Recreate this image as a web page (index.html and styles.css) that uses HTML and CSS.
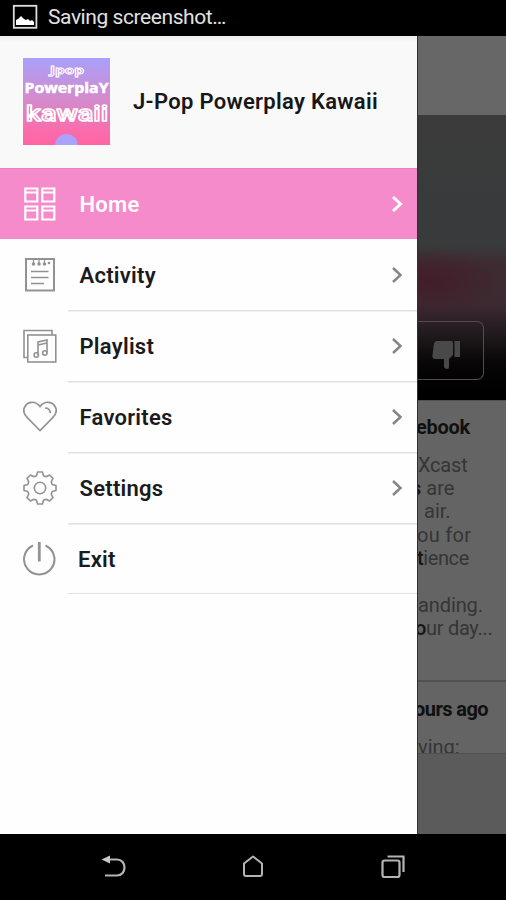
FILE: index.html
```html
<!DOCTYPE html>
<html lang="en">
<head>
<meta charset="utf-8">
<title>J-Pop Powerplay Kawaii</title>
<link rel="stylesheet" href="styles.css">
</head>
<body>
<div class="phone">
  <header class="status">
    <svg class="status-icon" width="26" height="26" viewBox="0 0 26 26"><rect x="1.800" y="1.800" width="22.600" height="22" fill="none" stroke="#ddd" stroke-width="1.800"/><path d="M4 21v-5l2-1 3-3 3 3 2 1 2-1 2 2 2-1 2 2v3z" fill="#fff"/></svg>
    <span class="status-text">Saving screenshot…</span>
  </header>
  <main class="content">
    <nav class="drawer">
      <div class="profile">
        <svg class="cover" width="87" height="87" viewBox="0 0 87 87">
          <defs><linearGradient id="sky" x2="0" y2="1"><stop offset="0" stop-color="#a9a0fb"/><stop offset=".48" stop-color="#d48bcc"/><stop offset=".85" stop-color="#fb6bab"/><stop offset="1" stop-color="#ff65a2"/></linearGradient></defs>
          <rect width="87" height="87" fill="url(#sky)"/>
          <circle cx="43.500" cy="87.500" r="11.500" fill="#a9a3fa"/>
          <g class="cover-text">
            <text class="cover-small" x="27" y="16" textLength="34" lengthAdjust="spacingAndGlyphs">Jpop</text>
            <text class="cover-mid" x="1.500" y="34.500" textLength="84" lengthAdjust="spacingAndGlyphs">PowerplaY</text>
            <text class="cover-big" x="3" y="62.500" textLength="82" lengthAdjust="spacingAndGlyphs">kawaii</text>
          </g>
        </svg>
        <h1 class="title">J-Pop Powerplay Kawaii</h1>
      </div>
      <ul class="menu">
        <li class="item active">
          <svg class="icon" width="34" height="34" viewBox="0 0 34 34"><g fill="none" stroke="#fff" stroke-width="2.200"><path d="M2.300 1.500h12v13h-12zM19.300 1.500h12v13h-12zM2.300 19.500h12v13h-12zM19.300 19.500h12v13h-12z"/><path stroke-width="1.800" d="M2 5.500h12M19 5.500h12M2 23.500h12M19 23.500h12"/></g></svg>
          <span class="label">Home</span>
          <svg class="chev" width="12" height="18" viewBox="0 0 12 18"><path d="M2 2l7.500 7L2 16"/></svg>
        </li>
        <li class="item">
          <svg class="icon" width="34" height="34" viewBox="0 0 34 34"><g fill="none" stroke="#929292"><path stroke-width="2" d="M3 1h28v31.500H3z"/><path stroke-width="1.600" d="M8 13.500h17.500M8 19.500h17.500M8 25.500h13"/><path stroke-width="1.200" d="M10.500 2v3M16 2v3M21.500 2v3"/></g><g fill="#929292"><circle cx="10.500" cy="6" r="1.800"/><circle cx="16" cy="6" r="1.800"/><circle cx="21.500" cy="6" r="1.800"/><circle cx="26" cy="5" r="1.300"/></g></svg>
          <span class="label">Activity</span>
          <svg class="chev" width="12" height="18" viewBox="0 0 12 18"><path d="M2 2l7.500 7L2 16"/></svg>
        </li>
        <li class="item">
          <svg class="icon" width="34" height="34" viewBox="0 0 34 34"><g fill="none" stroke="#929292" stroke-width="1.600"><path d="M4.500 28.500H1V1.500h28v4"/><rect x="4.800" y="6" width="28" height="27"/><path d="M15 26V13l9-2v12.500M15 16l9-2"/><circle cx="13.300" cy="26" r="2.200"/><circle cx="21.800" cy="24" r="2.200"/></g></svg>
          <span class="label">Playlist</span>
          <svg class="chev" width="12" height="18" viewBox="0 0 12 18"><path d="M2 2l7.500 7L2 16"/></svg>
        </li>
        <li class="item">
          <svg class="icon" width="34" height="34" viewBox="0 0 34 34"><g fill="none" stroke="#929292" stroke-width="1.700"><path d="M17 30.500L4.500 17.800C1 14.500 0 10.500 1.500 7.300 4 1.500 12 0 17 6.500 22 0 30 1.500 32.500 7.300 34 10.500 33 14.500 29.500 17.800z"/><path d="M22 8q5 0 5.200 5"/></g></svg>
          <span class="label">Favorites</span>
          <svg class="chev" width="12" height="18" viewBox="0 0 12 18"><path d="M2 2l7.500 7L2 16"/></svg>
        </li>
        <li class="item">
          <svg class="icon" width="34" height="34" viewBox="-17 -17 34 34"><g fill="none" stroke="#929292" stroke-width="1.600" stroke-linejoin="round"><path d="M-3.500-12.300L-2.400-16H2.400L3.500-12.300 6.200-11.200 9.600-13 13-9.600 11.200-6.200 12.300-3.500 16-2.400V2.400L12.300 3.500 11.200 6.200 13 9.600 9.600 13 6.200 11.200 3.500 12.300 2.400 16H-2.400L-3.500 12.300-6.200 11.200-9.600 13-13 9.600-11.200 6.200-12.300 3.500-16 2.400V-2.400L-12.300-3.500-11.200-6.200-13-9.600-9.600-13-6.200-11.200z"/><circle r="5.700"/></g></svg>
          <span class="label">Settings</span>
          <svg class="chev" width="12" height="18" viewBox="0 0 12 18"><path d="M2 2l7.500 7L2 16"/></svg>
        </li>
        <li class="item exit">
          <svg class="icon" width="34" height="34" viewBox="0 0 34 34"><g fill="none" stroke="#929292" stroke-width="2"><path d="M10 3.500A15.200 15.200 0 1 0 22.500 3.500"/><path stroke-width="2.800" d="M16.300 0v19.500"/></g></svg>
          <span class="label">Exit</span>
        </li>
      </ul>
    </nav>
    <section class="page">
      <div class="topbar"></div>
      <div class="hero">
        <div class="dislike"><svg width="28" height="30" viewBox="0 0 28 30" fill="#494949"><path d="M4 1h15q2 0 2 2v12l-4 4v8q0 2-2 2t-3-2v-8H3q-3 0-2.500-4L2 3z"/><path d="M22.500 1H28v16h-5.500z"/></svg></div>
      </div>
      <article class="post">
        <h2 class="head book">ebook</h2>
        <p class="line l1">Xcast</p>
        <p class="line l2"><b>s</b> are</p>
        <p class="line l3">air.</p>
        <p class="line l4">ou for</p>
        <p class="line l5"><b>t</b>ience</p>
        <p class="line l6">anding.</p>
        <p class="line l7"><b>o</b>ur day...</p>
      </article>
      <article class="post second">
        <h2 class="head hours">ours ago</h2>
        <p class="line l8">ving:</p>
      </article>
    </section>
  </main>
  <footer class="navbar">
    <svg width="26" height="24" viewBox="0 0 26 24"><path d="M7 4.500h9c10 0 10 16 0 16H4" fill="none" stroke="#b4b4b4" stroke-width="2.200"/><path d="M.5 4.500L9 .5v8z" fill="#c8c8c8"/></svg>
    <svg class="nav-home" width="22" height="24" viewBox="0 0 22 24"><path d="M2 8.500L11 1.500l9 7V19q0 2-2 2H4q-2 0-2-2z" fill="none" stroke="#b4b4b4" stroke-width="2" stroke-linejoin="round"/></svg>
    <svg width="24" height="24" viewBox="0 0 24 24"><g fill="none" stroke="#b4b4b4" stroke-width="2.200"><rect x="1.500" y="5.500" width="17" height="16.500" rx="2"/><path d="M6.500 1.500h16V17"/></g></svg>
  </footer>
</div>
</body>
</html>
```
FILE: styles.css
```css
* { box-sizing: border-box; }
body { margin: 0; background: #000; font-family: Roboto, "Liberation Sans", sans-serif; }
h1, h2, p, ul { margin: 0; padding: 0; }
svg { display: block; flex: none; }
.phone { width: 506px; height: 900px; display: flex; flex-direction: column; overflow: hidden; }
.status { height: 36px; display: flex; align-items: center; padding: 0 0 2px 12px; gap: 10px; background: #000; color: #e2e2e2; }
.status-text { font-size: 21px; line-height: 24px; letter-spacing: -.43px; white-space: nowrap; }
.content { height: 798px; display: flex; }
.drawer { width: 417px; background: #fefefe; flex: none; }
.profile { height: 132px; display: flex; align-items: center; padding: 0 0 2px 23px; gap: 23px; background: linear-gradient(#ececec, #f9f9f9 6px); }
.title { font-size: 22px; font-weight: 600; color: #171717; letter-spacing: .3px; white-space: nowrap; }
.cover-text { fill: #fff; stroke: #fff; stroke-width: .5; font-family: "Open Sans", sans-serif; font-weight: 700; }
.cover-small { font-size: 11px; fill: #bc92e4; stroke-width: .9; }
.cover-mid { font-size: 14px; }
.cover-big { font-family: Roboto, sans-serif; font-size: 22px; font-weight: 500; fill: #f46eb5; stroke-width: 1.500; stroke-linejoin: round; }
.menu { list-style: none; }
.item { height: 71px; display: flex; align-items: center; padding: 0 14px 0 23px; background: linear-gradient(#e0e0e0, #e0e0e0) 68px 0 / 349px 1.500px no-repeat; }
.item:last-child { background: linear-gradient(#e0e0e0, #e0e0e0) 68px 0 / 349px 1.500px no-repeat, linear-gradient(#e0e0e0, #e0e0e0) 68px 100% / 349px 1.500px no-repeat; }
.active { background: #f58bcb; color: #fff; border-top: 1px solid #e982bd; }
.active + .item { background: none; }
.label { flex: 1; margin-left: 22.500px; font-size: 22px; font-weight: 600; letter-spacing: .25px; line-height: 28px; color: #1b1b1b; padding-top: 2px; }
.active .label { color: #fff; }
.exit .label { margin-left: 21px; }
.chev { fill: none; stroke: #858585; stroke-width: 2.500; }
.active .chev { stroke: #fff; stroke-width: 3; }
.page { width: 89px; background: #5b5b5b; border-left: 1px solid #303030; overflow: hidden; }
.topbar { height: 79px; background: #676767; }
.hero { height: 285px; padding-top: 206px; background: radial-gradient(ellipse 70px 34px at 12px 166px, rgba(68, 24, 38, .7), transparent), linear-gradient(#3b3b3b 0, #383a3b 130px, #3e2b31 150px, #3d2931 190px, #241c20 215px, #070505 250px, #000 280px); }
.dislike { width: 66px; height: 59px; border: 1px solid #514c4e; border-left: 0; border-radius: 0 7px 7px 0; display: flex; align-items: center; padding: 9px 0 0 14px; }
.post { height: 282px; background: #646464; border-top: 1px solid #505050; border-bottom: 2px solid #515151; overflow: hidden; white-space: nowrap; padding-top: 11px; }
.head { font-size: 20px; line-height: 30px; font-weight: 700; color: #101010; }
.book { margin-left: -2px; letter-spacing: -.3px; }
.line { font-size: 20px; line-height: 23.200px; color: #353535; }
.line b { color: #151515; font-weight: 500; }
.l1 { margin-top: 12px; letter-spacing: -.2px; }
.l2 { margin-left: -7px; }
.l3 { margin-left: 6px; }
.l4 { margin-left: -1px; letter-spacing: .3px; }
.l5 { margin-left: -1px; letter-spacing: -.4px; }
.l6 { margin-top: 23.700px; letter-spacing: -.1px; }
.l7 { margin-left: -3px; letter-spacing: -.3px; }
.second { height: 72px; border-top: 0; border-bottom-width: 1px; padding-top: 12px; }
.hours { margin-left: -4px; letter-spacing: -.55px; }
.l8 { margin-top: 12px; }
.navbar { height: 66px; background: #000; display: flex; align-items: center; justify-content: space-between; padding: 0 101px; }
.nav-home { margin-right: 2px; }
```
